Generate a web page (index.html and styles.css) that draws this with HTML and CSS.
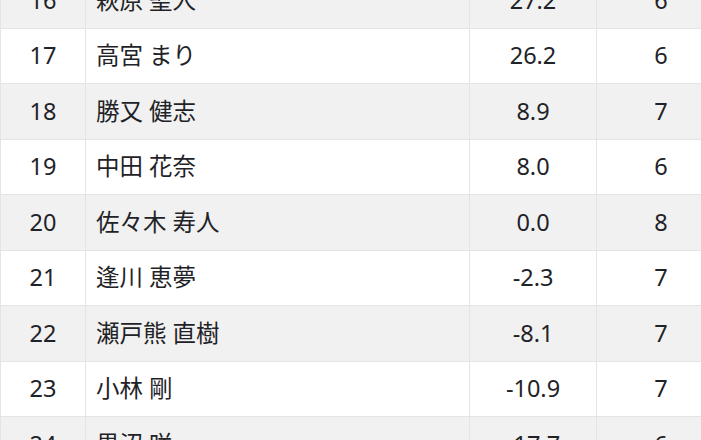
FILE: index.html
```html
<!DOCTYPE html>
<html lang="ja">
<head>
<meta charset="utf-8">
<link rel="stylesheet" href="styles.css">
</head>
<body>
<div class="viewport">
<table class="ranking">
<colgroup>
<col class="c-rank"><col class="c-name"><col class="c-score"><col class="c-count">
</colgroup>
<tbody>
<tr><td class="num">16</td><td class="name">萩原 聖人</td><td class="num">27.2</td><td class="num">6</td></tr>
<tr><td class="num">17</td><td class="name">高宮 まり</td><td class="num">26.2</td><td class="num">6</td></tr>
<tr><td class="num">18</td><td class="name">勝又 健志</td><td class="num">8.9</td><td class="num">7</td></tr>
<tr><td class="num">19</td><td class="name">中田 花奈</td><td class="num">8.0</td><td class="num">6</td></tr>
<tr><td class="num">20</td><td class="name">佐々木 寿人</td><td class="num">0.0</td><td class="num">8</td></tr>
<tr><td class="num">21</td><td class="name">逢川 恵夢</td><td class="num">-2.3</td><td class="num">7</td></tr>
<tr><td class="num">22</td><td class="name">瀬戸熊 直樹</td><td class="num">-8.1</td><td class="num">7</td></tr>
<tr><td class="num">23</td><td class="name">小林 剛</td><td class="num">-10.9</td><td class="num">7</td></tr>
<tr><td class="num">24</td><td class="name">黒沼 咲</td><td class="num">-17.7</td><td class="num">6</td></tr>
</tbody>
</table>
</div>
</body>
</html>
```
FILE: styles.css
```css
html, body {
  margin: 0;
  padding: 0;
  background: #ffffff;
  overflow: hidden;
}
.viewport {
  width: 701px;
  height: 440px;
  overflow: hidden;
}
.ranking {
  border-collapse: collapse;
  table-layout: fixed;
  width: 725px;
  margin-top: -28px;
  font-family: "Noto Sans", "Noto Sans CJK JP", sans-serif;
  font-size: 23.5px;
  color: #1f2327;
}
.c-rank { width: 85px; }
.c-name { width: 384px; }
.c-score { width: 127px; }
.c-count { width: 129px; }
.ranking td {
  height: 54.5px;
  padding: 0 12px;
  border: 1px solid #e1e4e8;
  vertical-align: middle;
  line-height: 1.3;
}
.ranking tr:nth-child(odd) td {
  background: #f1f1f1;
}
.ranking td.num { text-align: center; }
.ranking td.name { text-align: left; padding-left: 10px; }
```
